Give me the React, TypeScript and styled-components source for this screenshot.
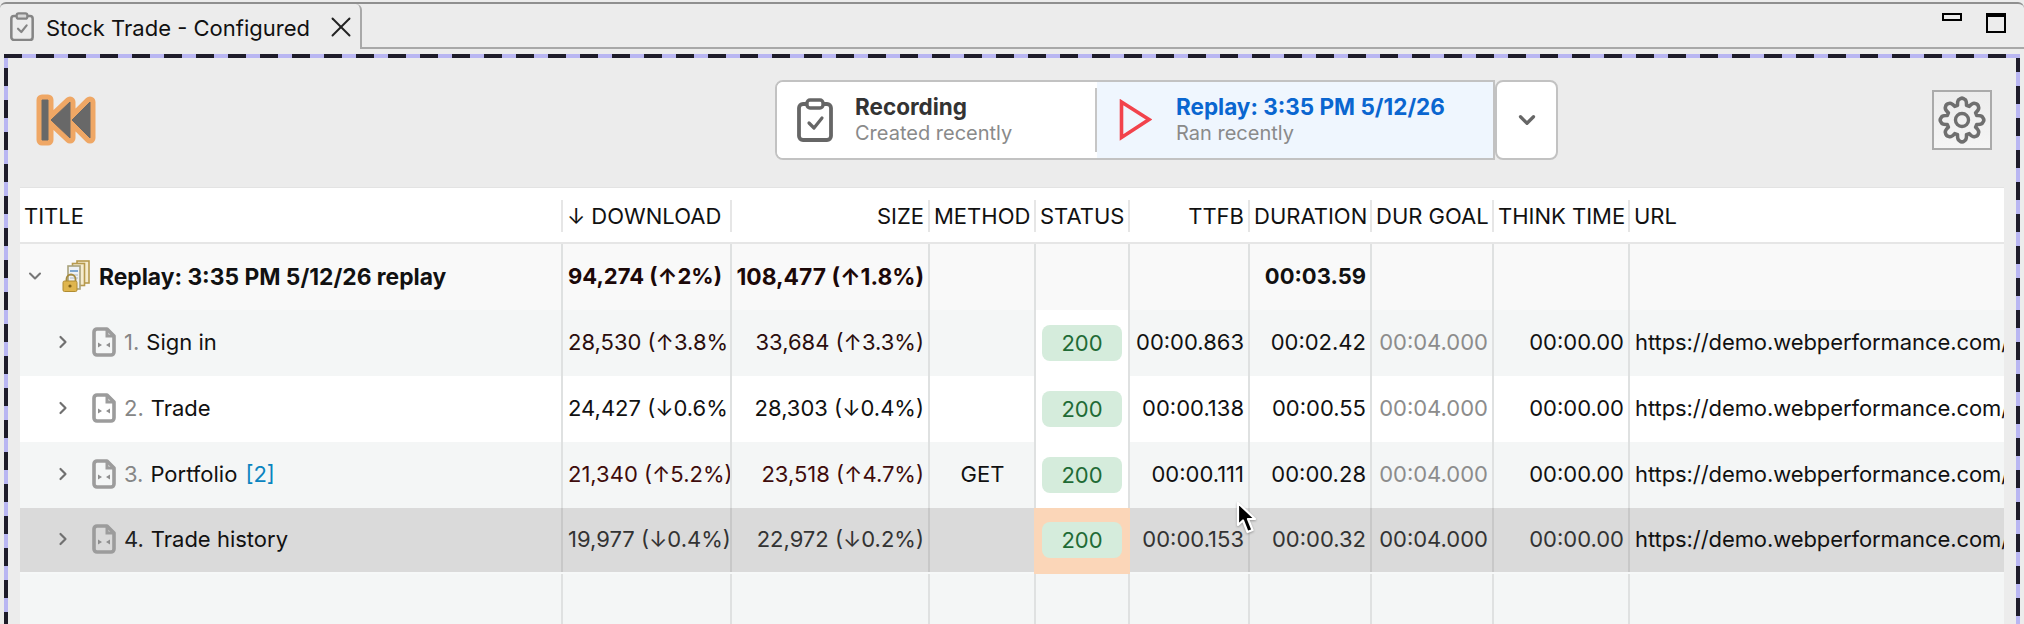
import styled, { createGlobalStyle } from "styled-components";
import { ChevronDown, ChevronRight, X } from "lucide-react";

const GlobalStyle = createGlobalStyle`
  html, body {
    margin: 0;
    padding: 0;
    background: #ececec;
  }
  * {
    box-sizing: border-box;
  }
`;

const COLUMNS = "541px 169px 198px 106px 94px 120px 122px 122px 136px 1fr";

const steps = [
  {
    num: "1.",
    title: "Sign in",
    download: "28,530 (↑3.8%",
    size: "33,684 (↑3.3%)",
    method: "",
    ttfb: "00:00.863",
    duration: "00:02.42",
    tone: "#2b0d0d",
  },
  {
    num: "2.",
    title: "Trade",
    download: "24,427 (↓0.6%",
    size: "28,303 (↓0.4%)",
    method: "",
    ttfb: "00:00.138",
    duration: "00:00.55",
    tone: "#111",
  },
  {
    num: "3.",
    title: "Portfolio",
    badge: "[2]",
    download: "21,340 (↑5.2%)",
    size: "23,518 (↑4.7%)",
    method: "GET",
    ttfb: "00:00.111",
    duration: "00:00.28",
    tone: "#3f0c0c",
  },
  {
    num: "4.",
    title: "Trade history",
    download: "19,977 (↓0.4%)",
    size: "22,972 (↓0.2%)",
    method: "",
    ttfb: "00:00.153",
    duration: "00:00.32",
    tone: "#333",
    selected: true,
  },
];

const gearPath = () => {
  const pts: string[] = [];
  const teeth = 8;
  for (let i = 0; i < teeth; i++) {
    const a = (i / teeth) * Math.PI * 2 - Math.PI / 2;
    const w = Math.PI / teeth;
    const p = (r: number, t: number) =>
      `${(30 + r * Math.cos(t)).toFixed(1)} ${(30 + r * Math.sin(t)).toFixed(1)}`;
    pts.push(`${i === 0 ? "M" : "L"}${p(16.5, a - w * 0.75)}`);
    pts.push(`Q${p(22, a - w * 0.6)} ${p(22.5, a - w * 0.3)}`);
    pts.push(`Q${p(24.5, a)} ${p(22.5, a + w * 0.3)}`);
    pts.push(`Q${p(22, a + w * 0.6)} ${p(16.5, a + w * 0.75)}`);
  }
  return pts.join(" ") + " Z";
};

const ClipboardIcon = ({ size, tone, clip }: { size: number; tone: string; clip: string }) => (
  <ClipboardSvg width={size} height={(size * 44) / 36} viewBox="0 0 36 44" fill="none">
    <rect x="2" y="6" width="32" height="36" rx="4" stroke={tone} strokeWidth="3.8" />
    <rect x="10" y="2" width="16" height="8" rx="3" fill={clip} stroke={tone} strokeWidth="3.4" />
    <path d="M12 25l5 5 8-10" stroke={tone} strokeWidth="3.2" strokeLinecap="round" strokeLinejoin="round" />
  </ClipboardSvg>
);

const RewindIcon = () => {
  const shapes = "M6 6h6v40H6z M15 26L34 8v36z M36 26L54 8v36z";
  return (
    <svg width="60" height="52" viewBox="0 0 60 52">
      <path d={shapes} fill="#efa765" stroke="#efa765" strokeWidth="11" strokeLinejoin="round" />
      <path d={shapes} fill="#686868" stroke="#686868" strokeWidth="1" />
    </svg>
  );
};

const PlayIcon = () => (
  <svg width="33" height="42" viewBox="0 0 33 42" fill="none">
    <path d="M2.500 3L30 20.500 2.500 38.500z" stroke="#f2434c" strokeWidth="3.600" strokeLinejoin="miter" />
  </svg>
);

const GearIcon = () => (
  <GearSvg width="56" height="56" viewBox="0 0 60 60" fill="none">
    <path d={gearPath()} stroke="#6f6f6f" strokeWidth="3.800" strokeLinejoin="round" />
    <circle cx="30" cy="30" r="7" stroke="#6f6f6f" strokeWidth="3.600" />
  </GearSvg>
);

const StackIcon = () => (
  <svg width="28" height="32" viewBox="0 0 28 32" fill="none">
    <rect x="15" y="1" width="12" height="22" fill="#f6ecd0" stroke="#b79a4e" strokeWidth="1.6" />
    <rect x="10.5" y="3.5" width="12" height="22" fill="#f6ecd0" stroke="#b79a4e" strokeWidth="1.6" />
    <rect x="6" y="6" width="12" height="23" fill="#eef1f4" stroke="#a9a27a" strokeWidth="1.6" />
    <path d="M8 11h8" stroke="#7fa7d0" strokeWidth="2" />
    <path d="M8 15h8M8 18h8" stroke="#c3cbd4" strokeWidth="1.4" />
    <path d="M4.5 22v-3a4.5 4.5 0 019 0v3" stroke="#a58a3e" strokeWidth="1.8" />
    <rect x="1" y="21" width="14" height="10.5" rx="1.5" fill="#dfb54e" stroke="#b08c32" strokeWidth="1" />
    <circle cx="8" cy="26" r="1.6" fill="#7d5f17" />
  </svg>
);

const DocIcon = () => (
  <DocSvg width="24" height="30" viewBox="0 0 24 30" fill="none">
    <path
      d="M5 2h10l7 7v16a3 3 0 01-3 3H5a3 3 0 01-3-3V5a3 3 0 013-3z"
      stroke="#9c9c9c"
      strokeWidth="3.600"
      strokeLinejoin="round"
    />
    <path d="M15 2v7h7" stroke="#9c9c9c" strokeWidth="3" />
    <path d="M6 15.500l4 2.500-4 2.500zM18 15.500l-4 2.500 4 2.500z" fill="#8e8e8e" />
  </DocSvg>
);

const CursorIcon = () => (
  <CursorSvg width="24" height="36" viewBox="0 0 24 36">
    <path
      d="M3 3v22l5-4.500L12.500 32l5-2-4.500-11H20z"
      fill="#000"
      stroke="#fff"
      strokeWidth="2.200"
      strokeLinejoin="round"
    />
  </CursorSvg>
);

const App = () => {
  return (
    <Page>
      <GlobalStyle />
      <TabBar>
        <Tab>
          <ClipboardIcon size={24} tone="#858585" clip="#d8d8d8" />
          <TabLabel>Stock Trade - Configured</TabLabel>
          <X size={34} strokeWidth={1.35} color="#222" />
        </Tab>
        <TabFill>
          <MinimizeButton />
          <MaximizeButton />
        </TabFill>
      </TabBar>

      <Frame>
        <Toolbar>
          <RewindIcon />
          <Switcher>
            <Segments>
              <Segment>
                <ClipboardIcon size={36} tone="#666" clip="#fff" />
                <SegmentText>
                  <SegmentTitle>Recording</SegmentTitle>
                  <SegmentSub>Created recently</SegmentSub>
                </SegmentText>
              </Segment>
              <SegmentDivider />
              <Segment $active>
                <PlayIcon />
                <SegmentText>
                  <SegmentTitle $active>Replay: 3:35 PM 5/12/26</SegmentTitle>
                  <SegmentSub>Ran recently</SegmentSub>
                </SegmentText>
              </Segment>
            </Segments>
            <DropButton>
              <ChevronDown size={26} strokeWidth={3} color="#666" />
            </DropButton>
          </Switcher>
          <GearButton>
            <GearIcon />
          </GearButton>
        </Toolbar>

        <Table>
          <HeaderRow>
            <HeadCell $first>TITLE</HeadCell>
            <HeadCell>
              <SortArrow>↓</SortArrow>DOWNLOAD
            </HeadCell>
            <HeadCell $align="right">SIZE</HeadCell>
            <HeadCell>METHOD</HeadCell>
            <HeadCell>STATUS</HeadCell>
            <HeadCell $align="right">TTFB</HeadCell>
            <HeadCell>DURATION</HeadCell>
            <HeadCell>DUR GOAL</HeadCell>
            <HeadCell $align="right">THINK TIME</HeadCell>
            <HeadCell>URL</HeadCell>
          </HeaderRow>

          <Row $bg="#f9f9f9">
            <TitleCell>
              <ChevronSlot $depth={0}>
                <ChevronDown size={28} strokeWidth={2.5} color="#777" />
              </ChevronSlot>
              <IconSlot $depth={0}>
                <StackIcon />
              </IconSlot>
              <StrongWide>Replay: 3:35 PM 5/12/26 replay</StrongWide>
            </TitleCell>
            <Cell $color="#1c0808">
              <Strong>94,274 (↑2%)</Strong>
            </Cell>
            <Cell $align="right" $color="#1c0808">
              <StrongWide>108,477 (↑1.8%)</StrongWide>
            </Cell>
            <Cell />
            <Cell />
            <Cell />
            <Cell $align="right">
              <Strong>00:03.59</Strong>
            </Cell>
            <Cell />
            <Cell />
            <Cell />
          </Row>

          {steps.map((step, i) => (
            <Row
              key={step.num}
              $bg={step.selected ? "#dadada" : i % 2 === 0 ? "#f4f6f6" : "#fff"}
              $selected={step.selected}
            >
              <TitleCell>
                <ChevronSlot $depth={1}>
                  <ChevronRight size={30} strokeWidth={2.6} color="#707070" />
                </ChevronSlot>
                <IconSlot $depth={1}>
                  <DocIcon />
                </IconSlot>
                <StepNumber $selected={step.selected}>{step.num}</StepNumber>
                <StepTitle>{step.title}</StepTitle>
                {step.badge && <StepBadge>{step.badge}</StepBadge>}
              </TitleCell>
              <Cell $selected={step.selected} $color={step.tone}>
                {step.download}
              </Cell>
              <Cell $selected={step.selected} $align="right" $color={step.tone}>
                {step.size}
              </Cell>
              <Cell $selected={step.selected} $align="center">
                {step.method}
              </Cell>
              <StatusCell $selected={step.selected}>
                <StatusPill>200</StatusPill>
              </StatusCell>
              <Cell $selected={step.selected} $align="right" $color={step.selected ? "#333" : "#111"}>
                {step.ttfb}
              </Cell>
              <Cell $selected={step.selected} $align="right" $color={step.selected ? "#333" : "#111"}>
                {step.duration}
              </Cell>
              <Cell $selected={step.selected} $align="right" $color={step.selected ? "#333" : "#8c8c8c"}>
                00:04.000
              </Cell>
              <Cell $selected={step.selected} $align="right" $color={step.selected ? "#333" : "#111"}>
                00:00.00
              </Cell>
              <UrlCell $selected={step.selected} $color="#111">
                https://demo.webperformance.com/
              </UrlCell>
            </Row>
          ))}

          <FillerRow>
            <Cell $first />
            <Cell />
            <Cell />
            <Cell />
            <Cell />
            <Cell />
            <Cell />
            <Cell />
            <Cell />
            <Cell />
          </FillerRow>
        </Table>
      </Frame>

      <CursorIcon />
    </Page>
  );
};

export default App;

const Page = styled.div`
  position: relative;
  width: 2024px;
  height: 624px;
  overflow: hidden;
  display: flex;
  flex-direction: column;
  padding-top: 2px;
  background: #ececec;
  color: #111;
  font-family: Inter, "Noto Sans", sans-serif;
  font-size: 22px;
`;

const TabBar = styled.div`
  display: flex;
  height: 47px;
  border-top: 2px solid #8f8f8f;
  border-radius: 6px 6px 0 0;
`;

const Tab = styled.div`
  display: flex;
  align-items: center;
  width: 362px;
  padding: 0 0 0 10px;
  border-right: 2px solid #a8a8a8;
  border-top-right-radius: 6px;
`;

const TabLabel = styled.span`
  margin: 0 14px 0 12px;
  padding-top: 3px;
  width: 264px;
  font-size: 22px;
  white-space: nowrap;
`;

const ClipboardSvg = styled.svg`
  flex: none;
  filter: blur(0.4px);
`;

const TabFill = styled.div`
  flex: 1;
  display: flex;
  justify-content: flex-end;
  gap: 24px;
  padding: 9px 18px 0 0;
  border-bottom: 2px solid #a8a8a8;
`;

const MinimizeButton = styled.div`
  width: 20px;
  height: 8px;
  border: 2px solid #000;
`;

const MaximizeButton = styled.div`
  width: 20px;
  height: 20px;
  border: 2px solid #000;
  border-top-width: 4px;
`;

const Frame = styled.div`
  flex: 1;
  display: flex;
  flex-direction: column;
  margin: 5px 4px 0;
  padding: 4px 16px 0;
  min-height: 0;
  background:
    repeating-linear-gradient(90deg, #1e1c2a 0 18px, #b9b6f2 18px 32px) top / 100% 4px no-repeat,
    repeating-linear-gradient(180deg, #b9b6f2 0 14px, #1e1c2a 14px 32px) left / 4px 100% no-repeat,
    repeating-linear-gradient(180deg, #1e1c2a 0 18px, #b9b6f2 18px 32px) right / 4px 100% no-repeat,
    #ececec;
`;

const Toolbar = styled.div`
  display: flex;
  align-items: center;
  height: 129px;
  flex: none;
  padding: 0 12px 5px 16px;
`;

const Switcher = styled.div`
  display: flex;
  height: 80px;
  margin-left: 679px;
`;

const Segments = styled.div`
  display: flex;
  align-items: center;
  width: 720px;
  border: 2px solid #c2c2c2;
  border-radius: 8px 0 0 8px;
  background: #fff;
  overflow: hidden;
`;

const Segment = styled.div<{ $active?: boolean }>`
  flex: ${(p) => (p.$active ? 1 : "none")};
  display: flex;
  align-items: center;
  align-self: stretch;
  gap: ${(p) => (p.$active ? "24px" : "22px")};
  width: ${(p) => (p.$active ? "auto" : "318px")};
  padding-left: ${(p) => (p.$active ? "22px" : "20px")};
  background: ${(p) => (p.$active ? "#eff6fe" : "#fff")};
`;

const SegmentDivider = styled.div`
  flex: none;
  width: 2px;
  height: 64px;
  background: #c6c6c6;
`;

const SegmentText = styled.div`
  display: flex;
  flex-direction: column;
`;

const SegmentTitle = styled.div<{ $active?: boolean }>`
  font-size: 22.500px;
  font-weight: 700;
  line-height: 26px;
  color: ${(p) => (p.$active ? "#0a66d0" : "#333")};
`;

const SegmentSub = styled.div`
  font-size: 20px;
  line-height: 26px;
  color: #8a8a8a;
`;

const DropButton = styled.div`
  display: flex;
  align-items: center;
  justify-content: center;
  width: 63px;
  border: 2px solid #c2c2c2;
  border-radius: 8px;
  background: #fff;
`;

const GearButton = styled.div`
  display: flex;
  align-items: center;
  justify-content: center;
  width: 60px;
  height: 60px;
  margin-left: auto;
  border: 2px solid #aaa;
  background: linear-gradient(#ececec, #f5f5f5);
`;

const GearSvg = styled.svg`
  filter: blur(0.3px);
`;

const Table = styled.div`
  flex: 1;
  display: flex;
  flex-direction: column;
  min-height: 0;
  background: #fff;
  border-top: 1px solid #e3e3e3;
  font-size: 22px;
`;

const HeaderRow = styled.div`
  display: grid;
  grid-template-columns: ${COLUMNS};
  align-items: center;
  flex: none;
  height: 56px;
  padding-top: 2px;
  border-bottom: 2px solid #e6e6e6;
`;

const HeadCell = styled.div<{ $first?: boolean; $align?: string }>`
  height: 32px;
  line-height: 32px;
  padding: 0 4px;
  overflow: hidden;
  white-space: nowrap;
  text-align: ${(p) => p.$align ?? "left"};
  border-left: ${(p) => (p.$first ? "none" : "2px solid #e6e6e6")};
`;

const SortArrow = styled.span`
  margin-right: 6px;
`;

const Row = styled.div<{ $bg: string; $selected?: boolean }>`
  display: grid;
  grid-template-columns: ${COLUMNS};
  flex: none;
  height: 66px;
  background: ${(p) => p.$bg};
  border-bottom: ${(p) => (p.$selected ? "2px solid #f6f8f8" : "none")};
`;

const FillerRow = styled.div`
  flex: 1;
  display: grid;
  grid-template-columns: ${COLUMNS};
  background: #f4f6f6;
`;

const Cell = styled.div<{ $align?: string; $color?: string; $selected?: boolean; $first?: boolean }>`
  display: flex;
  align-items: center;
  justify-content: ${(p) =>
    p.$align === "right" ? "flex-end" : p.$align === "center" ? "center" : "flex-start"};
  padding: 0 4px 2px 5px;
  overflow: hidden;
  white-space: nowrap;
  color: ${(p) => p.$color ?? "#111"};
  border-left: ${(p) =>
    p.$first ? "none" : p.$selected ? "2px solid #c8c8c8" : "2px solid #dfe1e1"};
`;

const UrlCell = styled(Cell)`
  padding-right: 0;
  letter-spacing: -0.08px;
`;

const TitleCell = styled.div`
  display: flex;
  align-items: center;
  padding-bottom: 2px;
  white-space: nowrap;
  overflow: hidden;
`;

const ChevronSlot = styled.div<{ $depth: number }>`
  flex: none;
  display: flex;
  align-items: center;
  justify-content: center;
  width: 20px;
  margin-left: ${(p) => (p.$depth ? "33px" : "5px")};
`;

const IconSlot = styled.div<{ $depth: number }>`
  flex: none;
  display: flex;
  width: ${(p) => (p.$depth ? "51px" : "54px")};
  padding-left: ${(p) => (p.$depth ? "19px" : "17px")};
`;

const DocSvg = styled.svg`
  filter: blur(0.6px);
`;

const Strong = styled.span`
  font-weight: 700;
`;

const StrongWide = styled(Strong)`
  font-size: 22.800px;
`;

const StepNumber = styled.span<{ $selected?: boolean }>`
  margin-right: 7px;
  color: ${(p) => (p.$selected ? "#222" : "#868686")};
`;

const StepTitle = styled.span`
  color: #111;
`;

const StepBadge = styled.span`
  margin-left: 8px;
  color: #0a84c0;
`;

const StatusCell = styled.div<{ $selected?: boolean }>`
  display: flex;
  align-items: center;
  justify-content: center;
  position: ${(p) => (p.$selected ? "relative" : "static")};
  margin: ${(p) => (p.$selected ? "0 -2px -2px 0" : "0")};
  padding: ${(p) => (p.$selected ? "0 2px 2px 0" : "0")};
  background: ${(p) => (p.$selected ? "#fbd6b8" : "#fff")};
  border-left: 2px solid ${(p) => (p.$selected ? "#fbd6b8" : "#dfe1e1")};
`;

const StatusPill = styled.div`
  width: 80px;
  height: 36px;
  line-height: 36px;
  text-align: center;
  border-radius: 8px;
  background: #d5ecdc;
  color: #1f6b36;
`;

const CursorSvg = styled.svg`
  position: absolute;
  left: 1235px;
  top: 500px;
  filter: drop-shadow(0 1px 1px rgba(0, 0, 0, 0.3));
`;
